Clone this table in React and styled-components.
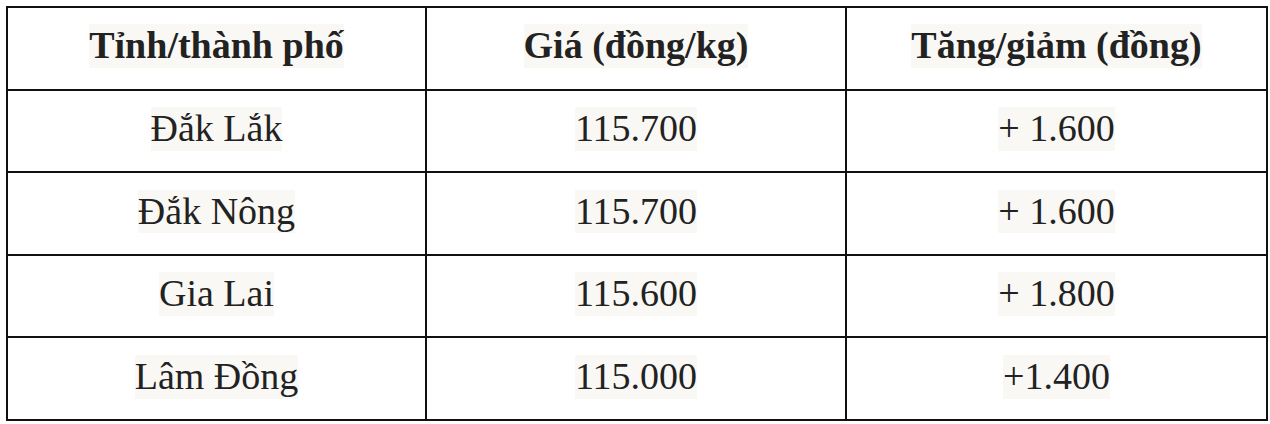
import React from 'react';
import styled, { createGlobalStyle } from 'styled-components';

const GlobalStyle = createGlobalStyle`
  html, body {
    margin: 0;
    padding: 0;
    background: #ffffff;
  }
  body {
    font-family: "Liberation Serif", "Times New Roman", serif;
    color: #222222;
  }
`;

const Page = styled.div`
  padding: 6px 0 0 6px;
`;

const Table = styled.table`
  border-collapse: collapse;
  table-layout: fixed;
  width: 1260px;
`;

const Cell = styled.td`
  border: 2px solid #111111;
  height: 75.6px;
  padding: 0 0 5px 0;
  text-align: center;
  vertical-align: middle;
  font-size: 38px;
  font-weight: ${(p) => (p.$head ? 700 : 400)};
`;

const Mark = styled.span`
  background: #f9f8f4;
  line-height: 1.15;
  display: inline-block;
`;

const rows = [
  ['Đắk Lắk', '115.700', '+ 1.600'],
  ['Đắk Nông', '115.700', '+ 1.600'],
  ['Gia Lai', '115.600', '+ 1.800'],
  ['Lâm Đồng', '115.000', '+1.400'],
];

export default function App() {
  return (
    <Page>
      <GlobalStyle />
      <Table>
        <colgroup>
          <col style={{ width: 419 }} />
          <col style={{ width: 420 }} />
          <col style={{ width: 421 }} />
        </colgroup>
        <tbody>
          <tr>
            <Cell $head><Mark>Tỉnh/thành phố</Mark></Cell>
            <Cell $head><Mark>Giá (đồng/kg)</Mark></Cell>
            <Cell $head><Mark>Tăng/giảm (đồng)</Mark></Cell>
          </tr>
          {rows.map((r) => (
            <tr key={r[0]}>
              {r.map((v, i) => (
                <Cell key={i}><Mark>{v}</Mark></Cell>
              ))}
            </tr>
          ))}
        </tbody>
      </Table>
    </Page>
  );
}
